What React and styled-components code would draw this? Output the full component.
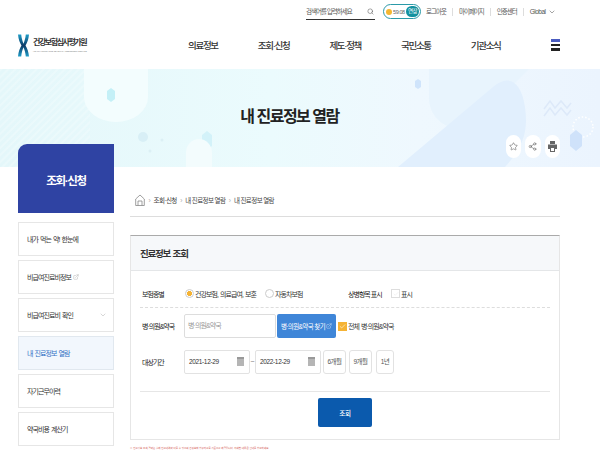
import React from "react";
import styled, { createGlobalStyle } from "styled-components";
import { ChevronDown, Search, Star, Share2, ExternalLink, Check } from "lucide-react";

const GlobalStyle = createGlobalStyle`
  html, body {
    margin: 0;
    padding: 0;
    background: #fff;
  }
  body {
    font-family: "Liberation Sans", "Noto Sans CJK KR", sans-serif;
    color: #333;
  }
  * { box-sizing: border-box; }
`;

const Page = styled.div`
  width: 600px;
  height: 450px;
  overflow: hidden;
`;

const TopBar = styled.div`
  height: 25px;
  padding: 3px 0 5px 306px;
  display: flex;
  align-items: center;
`;

const SearchBox = styled.div`
  width: 69px;
  height: 17px;
  flex: none;
  border-bottom: 1px solid #333;
  display: flex;
  align-items: center;
  justify-content: space-between;
  font-size: 6.5px;
  letter-spacing: -1px;
  color: #555;
  white-space: nowrap;
  padding-right: 1px;
`;

const Session = styled.div`
  width: 38px;
  height: 15px;
  flex: none;
  margin-left: 8px;
  margin-right: 5px;
  border: 1px solid #2b9aa8;
  border-radius: 8px;
  display: flex;
  align-items: center;
  gap: 1px;
  padding-left: 2px;
  font-size: 5.5px;
  letter-spacing: -0.4px;
  color: #666;
`;

const Clock = styled.span`
  width: 6px;
  height: 6px;
  border-radius: 50%;
  background: #f4b731;
`;

const Extend = styled.span`
  width: 13px;
  height: 11px;
  border-radius: 6px;
  background: #13919f;
  color: #fff;
  font-size: 5.5px;
  letter-spacing: -0.5px;
  line-height: 11px;
  text-align: center;
  margin-left: auto;
  margin-right: 1px;
`;

const TopLink = styled.span`
  font-size: 6.5px;
  letter-spacing: -1px;
  color: #555;
  white-space: nowrap;
  padding: 0 6px 0 ${(p) => (p.$first ? "0" : "6px")};
  line-height: 8px;
  border-left: ${(p) => (p.$first ? "none" : "1px solid #ddd")};
`;

const GlobalLink = styled(TopLink)`
  display: flex;
  align-items: center;
  gap: 2px;
  padding-right: 0;
  letter-spacing: -0.5px;
`;

const NavRow = styled.div`
  height: 44px;
  padding: 0 40px 4px 18px;
  display: flex;
  align-items: center;
`;

const Logo = styled.div`
  width: 70px;
  flex: none;
  margin-right: 100px;
  display: flex;
  align-items: center;
  gap: 4px;
`;

const LogoMark = styled.svg`
  flex: none;
`;

const LogoText = styled.div`
  display: flex;
  flex-direction: column;
  font-size: 8px;
  font-weight: 700;
  letter-spacing: -1.45px;
  color: #333;
  line-height: 12px;
  white-space: nowrap;

  small {
    font-size: 2px;
    font-weight: 400;
    line-height: 4px;
    letter-spacing: 0;
    color: #777;
  }
`;

const Menu = styled.nav`
  display: flex;
  gap: 40px;
`;

const MenuItem = styled.span`
  font-size: 9.5px;
  font-weight: 500;
  letter-spacing: -1.3px;
  color: #333;
  white-space: nowrap;
`;

const Burger = styled.div`
  margin-left: auto;
  width: 9px;
  display: flex;
  flex-direction: column;
  gap: 2px;

  i {
    display: block;
    height: 2.5px;
    background: #222;
  }
  i:first-child {
    background: #4a5cc0;
  }
`;

const Hero = styled.section`
  position: relative;
  height: 98px;
  overflow: hidden;
  background: linear-gradient(90deg, #e4f7fa 0%, #ebfbfd 45%, #eff8fe 70%, #ebf4fe 100%);
  text-align: center;
  padding: 37px 21px 0 0;
`;

const HeroArt = styled.svg`
  position: absolute;
  left: 0;
  top: 0;
`;

const HeroTitle = styled.h1`
  position: relative;
  margin: 0;
  font-size: 16px;
  line-height: 22px;
  font-weight: 700;
  letter-spacing: -1.5px;
  color: #222;
`;

const HeroActions = styled.div`
  position: absolute;
  right: 40px;
  bottom: 9px;
  display: flex;
  gap: 4px;
`;

const RoundBtn = styled.span`
  width: 15.5px;
  height: 23px;
  border-radius: 8px;
  background: #fff;
  color: #666;
  display: flex;
  align-items: center;
  justify-content: center;
`;

const Body = styled.div`
  display: flex;
  padding-left: 18px;
  padding-right: 40px;
  gap: 16px;
`;

const Side = styled.aside`
  width: 96px;
  flex: none;
  margin-top: -23px;
  position: relative;
`;

const SideTitle = styled.div`
  height: 69px;
  padding-top: 3px;
  background: #2f43a3;
  border-top-left-radius: 9px;
  color: #fff;
  font-size: 11.5px;
  font-weight: 700;
  letter-spacing: -1.3px;
  display: flex;
  align-items: center;
  justify-content: center;
  margin-bottom: 9px;
`;

const SideList = styled.ul`
  list-style: none;
  margin: 0;
  padding: 0;
  display: flex;
  flex-direction: column;
  gap: 3.6px;
`;

const SideItem = styled.li`
  height: 34.4px;
  border: 1px solid ${(p) => (p.$active ? "#e1e8ef" : "#e6e6e6")};
  background: ${(p) => (p.$active ? "#f2f7fd" : "#fff")};
  color: ${(p) => (p.$active ? "#2f6fc4" : "#333")};
  font-size: 7px;
  letter-spacing: -0.95px;
  word-spacing: 1px;
  padding: 0 6px 0 8px;
  display: flex;
  align-items: center;
  gap: 2px;
  white-space: nowrap;

  svg:last-child {
    color: #999;
  }
`;

const Main = styled.main`
  flex: 1;
  min-width: 0;
`;

const Crumbs = styled.div`
  height: 50px;
  margin-bottom: 18px;
  padding: 27px 0 0 5px;
  border-bottom: 1px solid #ddd;
  display: flex;
  align-items: flex-start;
  gap: 2.5px;
  font-size: 6.5px;
  line-height: 13px;
  letter-spacing: -0.6px;
  color: #444;

  b {
    font-weight: 400;
    color: #aaa;
    padding: 0 1px;
  }
`;

const Panel = styled.section`
  border: 1px solid #e6e6e6;
  border-top: 1px solid #aaa;
  height: 205px;
`;

const PanelHead = styled.h2`
  margin: 0;
  height: 35px;
  padding: 0 9px;
  background: #f6f8fa;
  border-bottom: 1px solid #e4e6e8;
  font-size: 9.5px;
  font-weight: 700;
  letter-spacing: -1.2px;
  word-spacing: 1px;
  line-height: 35px;
  color: #333;
`;

const PanelBody = styled.div`
  padding: 9px 9px 0;
`;

const Row = styled.div`
  display: flex;
  align-items: center;
  height: ${(p) => p.$h}px;
  padding-left: 2px;
  border-bottom: ${(p) => (p.$dashed ? "1px dashed #ddd" : "none")};
`;

const Label = styled.span`
  width: 42px;
  flex: none;
  font-size: 7px;
  letter-spacing: -1px;
  color: #222;
  white-space: nowrap;
`;

const OptText = styled.span`
  width: ${(p) => (p.$w ? `${p.$w}px` : "auto")};
  flex: none;
  font-size: 7px;
  letter-spacing: -0.95px;
  word-spacing: 1px;
  color: #333;
  white-space: nowrap;
`;

const Radio = styled.span`
  width: 9px;
  height: 9px;
  flex: none;
  margin: 0 1px 0 ${(p) => p.$ml || 0}px;
  border-radius: 50%;
  border: 1px solid #ccc;
  background: ${(p) => (p.$on ? "radial-gradient(circle, #f5b335 0 2.4px, #fff 2.8px)" : "#fff")};
`;

const Box = styled.span`
  width: 9px;
  height: 9px;
  flex: none;
  margin-right: 1px;
  border: 1px solid ${(p) => (p.$on ? "#f5b335" : "#ddd")};
  background: ${(p) => (p.$on ? "#f5b335" : "#fff")};
  color: ${(p) => (p.$on ? "#fff" : "#ddd")};
  display: flex;
  align-items: center;
  justify-content: center;
`;

const RightLabel = styled(Label)`
  width: 43px;
  margin-left: 45px;
`;

const HosInput = styled.div`
  width: 92px;
  height: 24px;
  border: 1px solid #ddd;
  border-radius: 2px;
  padding-left: 3px;
  font-size: 7px;
  letter-spacing: -0.9px;
  line-height: 22px;
  color: #999;
  flex: none;
`;

const FindBtn = styled.button`
  width: 59px;
  height: 24px;
  flex: none;
  margin: 0 2px 0 1px;
  padding: 0;
  border: none;
  border-radius: 2px;
  background: #3f86d8;
  color: #fff;
  font-family: inherit;
  font-size: 6.5px;
  letter-spacing: -0.6px;
  display: flex;
  align-items: center;
  justify-content: center;
  gap: 1px;
  white-space: nowrap;
`;

const DateBox = styled.div`
  width: 66px;
  height: 24px;
  flex: none;
  border: 1px solid #e2e2e2;
  border-radius: 2px;
  padding: 0 5px 0 4px;
  display: flex;
  align-items: center;
  justify-content: space-between;
  font-size: 6.5px;
  letter-spacing: -0.35px;
  color: #333;
`;

const Cal = styled.span`
  width: 7px;
  height: 9px;
  background: #b5b5b5;
  border-top: 2px solid #999;
`;

const Tilde = styled.span`
  width: 5px;
  text-align: center;
  font-size: 7px;
  color: #777;
`;

const PeriodBtn = styled.span`
  height: 24px;
  width: ${(p) => p.$w}px;
  margin-left: ${(p) => p.$ml}px;
  flex: none;
  border: 1px solid #e2e2e2;
  border-radius: 3px;
  font-size: 6.5px;
  letter-spacing: -0.5px;
  color: #555;
  text-align: center;
  line-height: 22px;
`;

const Actions = styled.div`
  margin-top: 12px;
  padding-top: 6px;
  border-top: 1px solid #e6e6e6;
  display: flex;
  justify-content: center;
`;

const SubmitBtn = styled.button`
  width: 54px;
  height: 29px;
  border: none;
  border-radius: 2px;
  background: #0b5aad;
  color: #fff;
  font-family: inherit;
  font-size: 6.5px;
  font-weight: 500;
  letter-spacing: -0.3px;
`;

const Notice = styled.p`
  margin: 6px 0 0;
  font-size: 2.5px;
  line-height: 6px;
  color: #d0504a;
  white-space: nowrap;
`;

const sideItems = [
  { label: "내가 먹는 약! 한눈에" },
  { label: "비급여진료비정보", link: true },
  { label: "비급여진료비 확인", more: true },
  { label: "내 진료정보 열람", active: true },
  { label: "자기근무이력" },
  { label: "약국비용 계산기" },
  { label: "" },
];

function HiraMark() {
  return (
    <LogoMark width="11" height="23" viewBox="0 0 12 24" aria-hidden="true">
      <defs>
        <linearGradient id="logoFill" x1="0" y1="0" x2="0" y2="1">
          <stop offset="0" stopColor="#1f9ec9" />
          <stop offset="0.5" stopColor="#0d3a66" />
          <stop offset="1" stopColor="#1f9ec9" />
        </linearGradient>
      </defs>
      <path
        d="M0 0h3.5c.4 4 1.4 7.5 2.5 10C7.100 7.500 8.100 4 8.500 0H12c-.4 5-2 9-3.800 12C10 15 11.600 19 12 24H8.500C8.100 20 7.100 16.500 6 14 4.900 16.500 3.900 20 3.500 24H0c.4-5 2-9 3.800-12C2 9 .4 5 0 0z"
        fill="url(#logoFill)"
      />
    </LogoMark>
  );
}

function HeroShapes() {
  return (
    <HeroArt width="600" height="98" viewBox="0 0 600 98" aria-hidden="true">
      <defs>
        <pattern id="stripes" width="5" height="5" patternUnits="userSpaceOnUse" patternTransform="rotate(-45)">
          <rect width="5" height="2" fill="#fff" opacity="0.22" />
        </pattern>
      </defs>
      <rect x="0" y="0" width="90" height="98" fill="url(#stripes)" />
      <path d="M84 -10h64v38a32 25 0 0 1-64 0z" fill="#f3fdfe" />
      <path d="M107 22l4-3 4 3v8l-4 3-4-3z" fill="#c4f0f7" />
      <circle cx="143" cy="68" r="5" fill="#d8eff6" />
      <circle cx="162" cy="71" r="1.500" fill="#dcf0f5" />
      <circle cx="150" cy="82" r="1.500" fill="#dcf0f5" />
      <path d="M202 66l5-4 5 4v11l-5 4-5-4z" fill="#d3f2f9" />
      <path d="M186 98v-14a13 14 0 0 1 26 0v14z" fill="#f3fcfd" />
      <path d="M429 0h100l-30 30-31 26c-14 10-39-4-39-27z" fill="#e8f4fd" />
      <path d="M398 98l95-80c14-12 28-8 32 20 3 22 0 38-20 60z" fill="#e1effd" />
      <path d="M415 12l3-2 3 2v6l-3 2-3-2z" fill="#cfe4fb" />
      <path d="M544 40l6-8 5 7 6-7 6 7 4-5M544 47l6-8 5 7 6-7 6 7 4-5" fill="none" stroke="#dde9f9" strokeWidth="1.500" />
      <circle cx="583" cy="58" r="10" fill="none" stroke="#fff" strokeWidth="1.500" strokeDasharray="1.500 2" />
      <path d="M570 66l6-5 6 5v11l-6 5-6-5z" fill="#cfe2fa" />
    </HeroArt>
  );
}

export default function App() {
  return (
    <Page>
      <GlobalStyle />
      <TopBar>
        <SearchBox>
          검색어를 입력하세요
          <Search size={7} strokeWidth={1.6} color="#444" />
        </SearchBox>
        <Session>
          <Clock />
          59:08
          <Extend>연장</Extend>
        </Session>
        <TopLink $first>로그아웃</TopLink>
        <TopLink>마이페이지</TopLink>
        <TopLink>인증센터</TopLink>
        <GlobalLink>
          Global
          <ChevronDown size={8} strokeWidth={1.6} />
        </GlobalLink>
      </TopBar>

      <NavRow>
        <Logo>
          <HiraMark />
          <LogoText>
            건강보험심사평가원
            <small>HEALTH INSURANCE REVIEW &amp; ASSESSMENT SERVICE</small>
          </LogoText>
        </Logo>
        <Menu>
          <MenuItem>의료정보</MenuItem>
          <MenuItem>조회·신청</MenuItem>
          <MenuItem>제도·정책</MenuItem>
          <MenuItem>국민소통</MenuItem>
          <MenuItem>기관소식</MenuItem>
        </Menu>
        <Burger>
          <i />
          <i />
          <i />
        </Burger>
      </NavRow>

      <Hero>
        <HeroShapes />
        <HeroTitle>내 진료정보 열람</HeroTitle>
        <HeroActions>
          <RoundBtn><Star size={9} strokeWidth={1.6} /></RoundBtn>
          <RoundBtn><Share2 size={9} strokeWidth={1.6} /></RoundBtn>
          <RoundBtn>
            <svg width="9" height="11" viewBox="0 0 9 11" aria-hidden="true">
              <path d="M2 0h5v3H2zM0 3.500h9V8H7v3H2V8H0z" fill="#666" />
              <path d="M3 7h3v3H3z" fill="#fff" />
            </svg>
          </RoundBtn>
        </HeroActions>
      </Hero>

      <Body>
        <Side>
          <SideTitle>조회·신청</SideTitle>
          <SideList>
            {sideItems.map((item, i) => (
              <SideItem key={i} $active={item.active}>
                {item.label}
                {item.link && <ExternalLink size={6} strokeWidth={1.4} />}
                {item.more && (
                  <ChevronDown size={8} strokeWidth={1.2} style={{ marginLeft: "auto" }} />
                )}
              </SideItem>
            ))}
          </SideList>
        </Side>

        <Main>
          <Crumbs>
            <svg width="10" height="12" viewBox="0 0 10 12" aria-hidden="true">
              <path d="M.7 11.500V5L5 1l4.300 4v6.500zM3 11.500V7h4v4.500" fill="none" stroke="#888" strokeWidth="0.8" />
            </svg>
            <b>›</b>
            <span>조회·신청</span>
            <b>›</b>
            <span>내 진료정보 열람</span>
            <b>›</b>
            <span>내 진료정보 열람</span>
          </Crumbs>

          <Panel>
            <PanelHead>진료정보 조회</PanelHead>
            <PanelBody>
              <Row $h={28} $dashed>
                <Label>보험종별</Label>
                <Radio $on $ml={1} />
                <OptText $w={60}>건강보험, 의료급여, 보훈</OptText>
                <Radio $ml={10} />
                <OptText $w={28}>자동차보험</OptText>
                <RightLabel>상병항목 표시</RightLabel>
                <Box><Check size={6} strokeWidth={1.4} /></Box>
                <OptText>표시</OptText>
              </Row>
              <Row $h={36}>
                <Label>병·의원&amp;약국</Label>
                <HosInput>병·의원&amp;약국</HosInput>
                <FindBtn>
                  병·의원&amp;약국 찾기
                  <ExternalLink size={6} strokeWidth={1.4} />
                </FindBtn>
                <Box $on><Check size={7} strokeWidth={2} /></Box>
                <OptText>전체 병·의원&amp;약국</OptText>
              </Row>
              <Row $h={35}>
                <Label>대상기간</Label>
                <DateBox>2021-12-29<Cal /></DateBox>
                <Tilde>~</Tilde>
                <DateBox>2022-12-29<Cal /></DateBox>
                <PeriodBtn $w={23} $ml={2}>6개월</PeriodBtn>
                <PeriodBtn $w={23} $ml={3}>9개월</PeriodBtn>
                <PeriodBtn $w={18} $ml={4}>1년</PeriodBtn>
              </Row>
              <Actions>
                <SubmitBtn>조회</SubmitBtn>
              </Actions>
            </PanelBody>
          </Panel>
          <Notice>※ 진료정보 조회 결과는 실제 진료내역과 다를 수 있으며 건강보험 청구자료를 기준으로 제공됩니다. 자세한 내용은 안내를 참고하세요.</Notice>
        </Main>
      </Body>
    </Page>
  );
}
